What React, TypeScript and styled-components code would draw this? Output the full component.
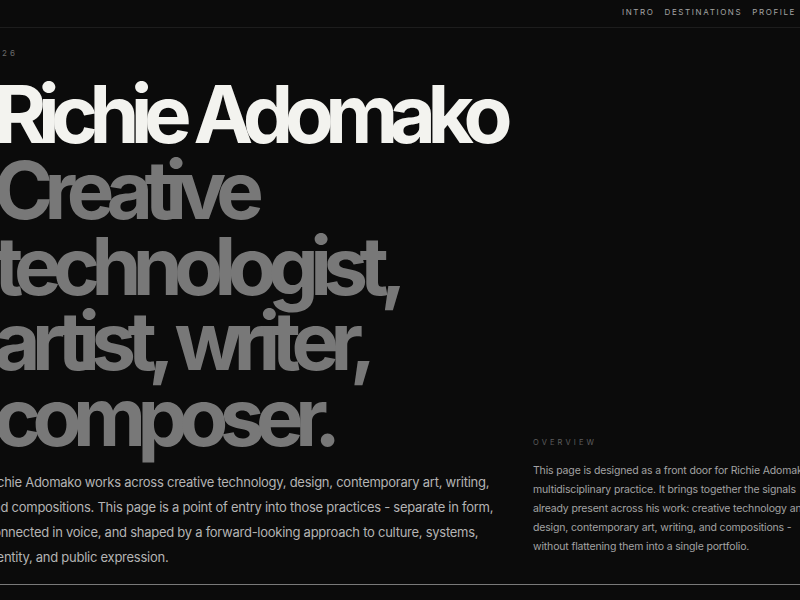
import React from 'react';
import styled, { createGlobalStyle } from 'styled-components';

const GlobalStyle = createGlobalStyle`
  html, body {
    margin: 0;
    padding: 0;
    background: #0b0b0b;
  }
  body {
    font-family: Inter, 'Noto Sans', 'Liberation Sans', sans-serif;
    -webkit-font-smoothing: antialiased;
  }
`;

const Page = styled.div`
  width: 800px;
  height: 600px;
  overflow: hidden;
  background: #0b0b0b;
  color: #f2f2ee;
`;

const TopBar = styled.header`
  height: 28px;
  border-bottom: 1px solid #1d1d1d;
  display: flex;
  align-items: center;
  justify-content: flex-end;
  padding-right: 4px;
  padding-bottom: 4px;
  box-sizing: border-box;
`;

const Nav = styled.nav`
  display: flex;
  gap: 10px;
`;

const NavLink = styled.a`
  font-size: 8px;
  line-height: 10px;
  letter-spacing: 0.2em;
  color: #a3a3a3;
  text-transform: uppercase;
  text-decoration: none;
`;

const Hero = styled.main`
  display: grid;
  grid-template-columns: 547px 1fr;
  align-items: end;
  margin-left: -14px;
  border-bottom: 1px solid #7a7a7a;
  padding-bottom: 14px;
`;

const LeftCol = styled.section`
  display: flex;
  flex-direction: column;
`;

const Kicker = styled.div`
  font-size: 8px;
  line-height: 12px;
  letter-spacing: 0.38em;
  color: #6a6a6a;
  margin-top: 19px;
  margin-bottom: 17px;
`;

const Heading = styled.h1`
  margin: 0 0 0 8px;
  font-size: 80px;
  font-weight: 700;
  letter-spacing: -0.107em;
  line-height: 75.75px;
`;

const HeadingLine = styled.span<{ $muted?: boolean }>`
  display: block;
  white-space: nowrap;
  color: ${p => (p.$muted ? '#787878' : '#f3f3ef')};
`;

const Intro = styled.p`
  margin: 15px 0 0;
  font-size: 13px;
  line-height: 25px;
  letter-spacing: -0.02em;
  color: #b4b4b4;
  width: 510px;
`;

const RightCol = styled.aside`
  display: flex;
  flex-direction: column;
  padding-bottom: 14px;
`;

const Eyebrow = styled.div`
  font-size: 7.5px;
  line-height: 10px;
  letter-spacing: 0.42em;
  color: #5e5e5e;
  text-transform: uppercase;
  margin-bottom: 13px;
`;

const Overview = styled.p`
  margin: 0;
  font-size: 10.5px;
  line-height: 19px;
  letter-spacing: -0.015em;
  color: #a3a3a3;
  width: 285px;
`;

export default function App() {
  return (
    <>
      <GlobalStyle />
      <Page>
        <TopBar>
          <Nav>
            <NavLink>Intro</NavLink>
            <NavLink>Destinations</NavLink>
            <NavLink>Profile</NavLink>
          </Nav>
        </TopBar>
        <Hero>
          <LeftCol>
            <Kicker>2026</Kicker>
            <Heading>
              <HeadingLine>Richie Adomako</HeadingLine>
              <HeadingLine $muted>Creative</HeadingLine>
              <HeadingLine $muted>technologist,</HeadingLine>
              <HeadingLine $muted>artist, writer,</HeadingLine>
              <HeadingLine $muted>composer.</HeadingLine>
            </Heading>
            <Intro>
              Richie Adomako works across creative technology, design, contemporary art, writing,
              and compositions. This page is a point of entry into those practices - separate in
              form, connected in voice, and shaped by a forward-looking approach to culture,
              systems, identity, and public expression.
            </Intro>
          </LeftCol>
          <RightCol>
            <Eyebrow>Overview</Eyebrow>
            <Overview>
              This page is designed as a front door for Richie Adomako's multidisciplinary
              practice. It brings together the signals already present across his work: creative
              technology and design, contemporary art, writing, and compositions - without
              flattening them into a single portfolio.
            </Overview>
          </RightCol>
        </Hero>
      </Page>
    </>
  );
}
